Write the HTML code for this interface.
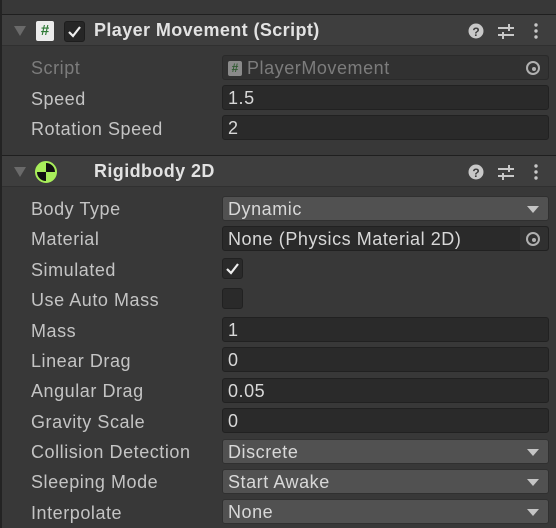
<!DOCTYPE html>
<html><head><style>
*{margin:0;padding:0;box-sizing:border-box}
body{width:556px;height:528px;background:#383838;font-family:"Liberation Sans",sans-serif;overflow:hidden;position:relative;color:#c8c8c8}
.vl{position:absolute;left:0;top:0;width:2px;height:528px;background:#232323}
.hdr{position:absolute;left:2px;width:554px;height:32px;background:#3e3e3e;border-top:1px solid #1f1f1f;border-bottom:1px solid #303030}
.tri{position:absolute;left:12px;top:11px;width:0;height:0;border-left:6px solid transparent;border-right:6px solid transparent;border-top:10px solid #6a6a6a}
.title{position:absolute;left:92px;top:5px;font-size:18px;font-weight:bold;color:#e2e2e2;letter-spacing:0.4px}
.lab{position:absolute;left:31px;font-size:18px;color:#c4c4c4;line-height:20px;letter-spacing:0.55px;margin-top:1px}
.f{position:absolute;left:222px;width:327px;height:25px;border-radius:3px;font-size:18px;line-height:25px;padding-left:5px;color:#d8d8d8;letter-spacing:0.55px}
.t{background:#2a2a2a;border:1px solid #212121}
.d{background:#515151;border:1px solid #303030}
.d:after{content:"";position:absolute;right:9px;top:9px;border-left:6px solid transparent;border-right:6px solid transparent;border-top:7px solid #c4c4c4}
.cb{position:absolute;left:222px;width:21px;height:21px;background:#2a2a2a;border:1px solid #212121;border-radius:3px}
.ob{position:absolute;right:0;top:0;width:28px;height:100%;background:#303030;border-radius:0 3px 3px 0}
.ob:after{content:"";position:absolute;left:6px;top:5px;width:10px;height:10px;border:2px solid #b0b0b0;border-radius:50%}
.ob:before{content:"";position:absolute;left:12px;top:11px;width:4px;height:4px;background:#b0b0b0;border-radius:50%}
</style></head><body>
<div class="vl"></div>

<div class="hdr" style="top:14px">
<div class="tri"></div>
<div style="position:absolute;left:34px;top:6px;width:18px;height:20px;background:#ececec;border-radius:2px;color:#2f7a36;font-weight:bold;font-size:15px;text-align:center;line-height:20px">#</div>
<div style="position:absolute;left:62px;top:6px;width:21px;height:21px;background:#262626;border:1px solid #1d1d1d;border-radius:3px">
<svg width="19" height="19" viewBox="0 0 19 19" style="position:absolute;left:0;top:0"><path d="M4 10 L8 14 L15 5" stroke="#eee" stroke-width="2.2" fill="none"/></svg></div>
<div class="title">Player Movement (Script)</div>
</div>

<div class="hdr" style="top:155px">
<div class="tri"></div>
<svg width="24" height="24" style="position:absolute;left:32px;top:4px" viewBox="0 0 24 24"><circle cx="12" cy="12" r="10" fill="#a8ee5a" stroke="#a8ee5a"/><path d="M12 12 L12 2 A10 10 0 0 1 22 12 Z M12 12 L12 22 A10 10 0 0 1 2 12 Z" fill="#111"/><circle cx="12" cy="12" r="10" fill="none" stroke="#a8ee5a" stroke-width="2"/></svg>
<div class="title">Rigidbody 2D</div>
</div>

<svg width="556" height="190" style="position:absolute;left:0;top:0" viewBox="0 0 556 190">
<g id="ic">
<circle cx="476" cy="31" r="7.5" fill="#c8c8c8"/>
<text x="476" y="36" font-size="12" font-weight="bold" text-anchor="middle" fill="#3e3e3e" font-family="Liberation Sans">?</text>
<path d="M498 28 H514 M498 35 H514" stroke="#c8c8c8" stroke-width="2"/>
<path d="M509 24 V31 M503 32 V39" stroke="#c8c8c8" stroke-width="2"/>
<circle cx="536" cy="25" r="1.7" fill="#c8c8c8"/><circle cx="536" cy="31" r="1.7" fill="#c8c8c8"/><circle cx="536" cy="37" r="1.7" fill="#c8c8c8"/>
</g>
<use href="#ic" y="141"/>
</svg>

<div class="lab" style="top:57px;color:#7c7c7c">Script</div>
<div class="f t" style="top:55px;background:#313131;border-color:#2a2a2a;color:#7c7c7c;padding-left:24px"><span style="position:absolute;left:5px;top:5px;width:14px;height:15px;background:#8a8a8a;border-radius:2px;color:#2f5a30;font-size:12px;font-weight:bold;text-align:center;line-height:15px;letter-spacing:0">#</span>PlayerMovement<div class="ob" style="background:#333"></div></div>
<div class="lab" style="top:88px">Speed</div><div class="f t" style="top:85px">1.5</div>
<div class="lab" style="top:118px">Rotation Speed</div><div class="f t" style="top:115px">2</div>

<div class="lab" style="top:198px">Body Type</div><div class="f d" style="top:196px">Dynamic</div>
<div class="lab" style="top:228px">Material</div><div class="f t" style="top:226px">None (Physics Material 2D)<div class="ob"></div></div>
<div class="lab" style="top:259px">Simulated</div><div class="cb" style="top:258px"><svg width="19" height="19" viewBox="0 0 19 19"><path d="M4 10 L8 14 L15 5" stroke="#eee" stroke-width="2.2" fill="none"/></svg></div>
<div class="lab" style="top:289px">Use Auto Mass</div><div class="cb" style="top:288px"></div>
<div class="lab" style="top:320px">Mass</div><div class="f t" style="top:317px">1</div>
<div class="lab" style="top:350px">Linear Drag</div><div class="f t" style="top:347px">0</div>
<div class="lab" style="top:380px">Angular Drag</div><div class="f t" style="top:378px">0.05</div>
<div class="lab" style="top:411px">Gravity Scale</div><div class="f t" style="top:408px">0</div>
<div class="lab" style="top:441px">Collision Detection</div><div class="f d" style="top:439px">Discrete</div>
<div class="lab" style="top:471px">Sleeping Mode</div><div class="f d" style="top:469px">Start Awake</div>
<div class="lab" style="top:502px">Interpolate</div><div class="f d" style="top:499px">None</div>
</body></html>
